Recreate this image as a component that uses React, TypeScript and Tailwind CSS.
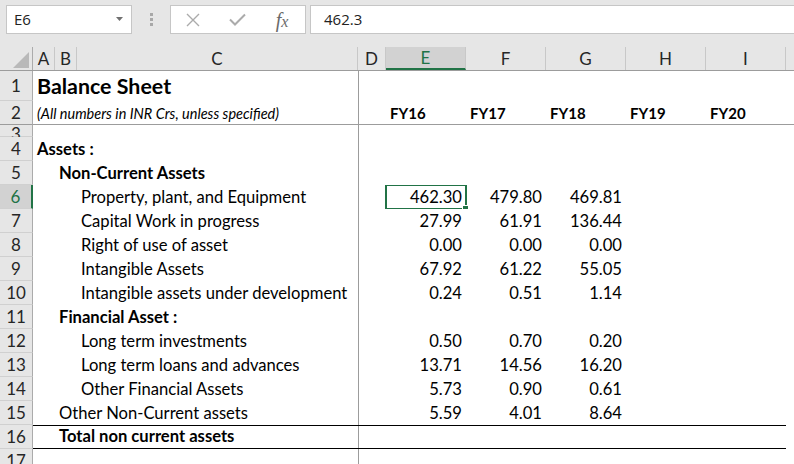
import React from 'react';

const font = { fontFamily: 'Lato, "Noto Sans", sans-serif' };

type Line = {
    n: string;
    h: 'h-[30px]' | 'h-[24px]' | 'h-[12px]';
    text?: string;
    col?: 'A' | 'B' | 'C';
    cls?: string;
    vals?: string[];
    fy?: boolean;
    selected?: boolean;
    total?: boolean;
    freeze?: boolean;
};

const rows: Line[] = [
    { n: '1', h: 'h-[30px]', text: 'Balance Sheet', col: 'A', cls: 'text-[21.4px] font-bold leading-[29px]' },
    { n: '2', h: 'h-[24px]', text: '(All numbers in INR Crs, unless specified)', col: 'A', cls: 'text-[14.5px] italic leading-[20px]', fy: true, freeze: true },
    { n: '3', h: 'h-[12px]' },
    { n: '4', h: 'h-[24px]', text: 'Assets :', col: 'A', cls: 'font-bold' },
    { n: '5', h: 'h-[24px]', text: 'Non-Current Assets', col: 'B', cls: 'font-bold' },
    { n: '6', h: 'h-[24px]', text: 'Property, plant, and Equipment', col: 'C', vals: ['462.30', '479.80', '469.81'], selected: true },
    { n: '7', h: 'h-[24px]', text: 'Capital Work in progress', col: 'C', vals: ['27.99', '61.91', '136.44'] },
    { n: '8', h: 'h-[24px]', text: 'Right of use of asset', col: 'C', vals: ['0.00', '0.00', '0.00'] },
    { n: '9', h: 'h-[24px]', text: 'Intangible Assets', col: 'C', vals: ['67.92', '61.22', '55.05'] },
    { n: '10', h: 'h-[24px]', text: 'Intangible assets under development', col: 'C', vals: ['0.24', '0.51', '1.14'] },
    { n: '11', h: 'h-[24px]', text: 'Financial Asset :', col: 'B', cls: 'font-bold' },
    { n: '12', h: 'h-[24px]', text: 'Long term investments', col: 'C', vals: ['0.50', '0.70', '0.20'] },
    { n: '13', h: 'h-[24px]', text: 'Long term loans and advances', col: 'C', vals: ['13.71', '14.56', '16.20'] },
    { n: '14', h: 'h-[24px]', text: 'Other Financial Assets', col: 'C', vals: ['5.73', '0.90', '0.61'] },
    { n: '15', h: 'h-[24px]', text: 'Other Non-Current assets', col: 'B', vals: ['5.59', '4.01', '8.64'] },
    { n: '16', h: 'h-[24px]', text: 'Total non current assets', col: 'B', cls: 'font-bold', total: true },
    { n: '17', h: 'h-[24px]' },
];

const colHeads = [
    { l: 'A', w: 'w-[22px]' },
    { l: 'B', w: 'w-[22px]' },
    { l: 'C', w: 'w-[281px]' },
    { l: 'D', w: 'w-[28px]' },
    { l: 'E', w: 'w-[80px]' },
    { l: 'F', w: 'w-[80px]' },
    { l: 'G', w: 'w-[80px]' },
    { l: 'H', w: 'w-[80px]' },
    { l: 'I', w: 'w-[80px]' },
];

const fys = ['FY16', 'FY17', 'FY18', 'FY19', 'FY20'];

function FormulaBar() {
    return (
        <div className="h-[47px] bg-[#e6e6e6] flex items-start pt-[5px]">
            {/* name box */}
            <div className="ml-[6px] w-[126px] h-[29px] bg-white border border-[#c6c6c6] flex items-center justify-between pl-[7px] pr-[7px]">
                <span className="text-[15px] text-[#222]" style={{ fontFamily: '"Open Sans", sans-serif' }}>E6</span>
                <svg width="8" height="5" viewBox="0 0 8 5"><path d="M0 0h7L3.5 4z" fill="#707070" /></svg>
            </div>
            <div className="w-[38px] h-[29px] flex flex-col items-center justify-center gap-[2px]">
                <span className="w-[3px] h-[3px] bg-[#a8a8a8]" />
                <span className="w-[3px] h-[3px] bg-[#a8a8a8]" />
                <span className="w-[3px] h-[3px] bg-[#a8a8a8]" />
            </div>
            <div className="w-[136px] h-[29px] bg-white border border-[#c6c6c6] flex items-center">
                <div className="w-[44px] flex justify-center">
                    <svg width="14" height="14" viewBox="0 0 14 14"><path d="M1 1l12 12M13 1L1 13" stroke="#ababab" strokeWidth="1.4" /></svg>
                </div>
                <div className="w-[44px] flex justify-center">
                    <svg width="17" height="13" viewBox="0 0 17 13"><path d="M1 6.5l5 5L16 1.5" stroke="#ababab" strokeWidth="2" fill="none" /></svg>
                </div>
                <div className="w-[46px] flex justify-center">
                    <span className="text-[20px] italic text-[#6a6a6a] leading-none" style={{ fontFamily: '"Liberation Serif", serif' }}>
                        f<span className="text-[16px]">x</span>
                    </span>
                </div>
            </div>
            <div className="ml-[4px] flex-1 h-[29px] bg-white border border-r-0 border-[#c6c6c6] flex items-center pl-[13px]">
                <span className="text-[15px] text-[#222]" style={{ fontFamily: '"Open Sans", sans-serif' }}>462.3</span>
            </div>
        </div>
    );
}

function ColumnHeader() {
    return (
        <div className="flex h-[24px] bg-[#e6e6e6] border-b border-[#9c9c9c]" style={font}>
            <div className="w-[33px] shrink-0 border-r border-[#ababab] flex items-end justify-end pr-[3px] pb-[2px]">
                <svg width="16" height="16" viewBox="0 0 16 16"><path d="M16 0V16H0z" fill="#b9b9b9" /></svg>
            </div>
            {colHeads.map((c) => {
                const sel = c.l === 'E';
                return (
                    <div
                        key={c.l}
                        className={`${c.w} shrink-0 flex items-center justify-center text-[17px] border-r border-[#c8c8c8] ${
                            sel ? 'bg-[#d2d2d2] text-[#217346] border-b-2 border-b-[#217346]' : 'text-[#262626]'
                        }`}
                    >
                        {c.l}
                    </div>
                );
            })}
            <div className="flex-1" />
        </div>
    );
}

function SheetRow({ r }: { r: Line }) {
    const txt = (col: 'A' | 'B' | 'C') =>
        r.text && r.col === col ? (
            <span className={`whitespace-nowrap pl-[4px] text-black ${r.cls ?? ''}`}>{r.text}</span>
        ) : null;

    return (
        <div className={`flex ${r.h} overflow-hidden`} style={font}>
            <div
                className={`w-[33px] shrink-0 flex justify-center border-b ${
                    r.freeze ? 'border-b-[#9c9c9c]' : 'border-b-[#d0d0d0]'
                } ${r.n === '3' ? 'items-start leading-[17px]' : 'items-center'} text-[17px] ${
                    r.selected
                        ? 'bg-[#d2d2d2] text-[#217346] border-r-2 border-r-[#217346]'
                        : 'bg-[#e6e6e6] text-[#262626] border-r border-r-[#ababab]'
                }`}
            >
                {r.n}
            </div>
            <div
                className={`flex ${r.freeze ? 'border-b border-[#9c9c9c]' : ''} ${
                    r.total ? 'w-[753px] border-y border-black' : 'flex-1'
                } text-[16.6px] leading-[24px] items-end`}
            >
                <div className="w-[22px] shrink-0 h-full flex items-end overflow-visible">{txt('A')}</div>
                <div className="w-[22px] shrink-0 h-full flex items-end overflow-visible">{txt('B')}</div>
                <div className="w-[281px] shrink-0 h-full flex items-end overflow-visible">{txt('C')}</div>
                <div className="w-[28px] shrink-0 h-full border-l border-[#9c9c9c]" />
                {[0, 1, 2, 3, 4].map((i) => (
                    <div key={i} className="w-[80px] shrink-0 h-full relative flex items-end justify-end pr-[4px]">
                        {r.fy && (
                            <span className="mr-auto pl-[4px] text-[15px] font-bold text-black leading-[21px]">{fys[i]}</span>
                        )}
                        {r.vals && r.vals[i] && <span className="text-black">{r.vals[i]}</span>}
                        {r.selected && i === 0 && (
                            <div className="absolute -left-[1px] -top-[1px] -right-[1px] -bottom-[1px] border-2 border-[#217346]">
                                <div className="absolute -right-[4px] -bottom-[4px] w-[7px] h-[7px] bg-[#217346] border border-white" />
                            </div>
                        )}
                    </div>
                ))}
                {r.total ? null : <div className="flex-1" />}
            </div>
        </div>
    );
}

export default function App() {
    return (
        <div className="w-[794px] h-[464px] overflow-hidden bg-white">
            <FormulaBar />
            <ColumnHeader />
            {rows.map((r) => (
                <SheetRow key={r.n} r={r} />
            ))}
        </div>
    );
}
